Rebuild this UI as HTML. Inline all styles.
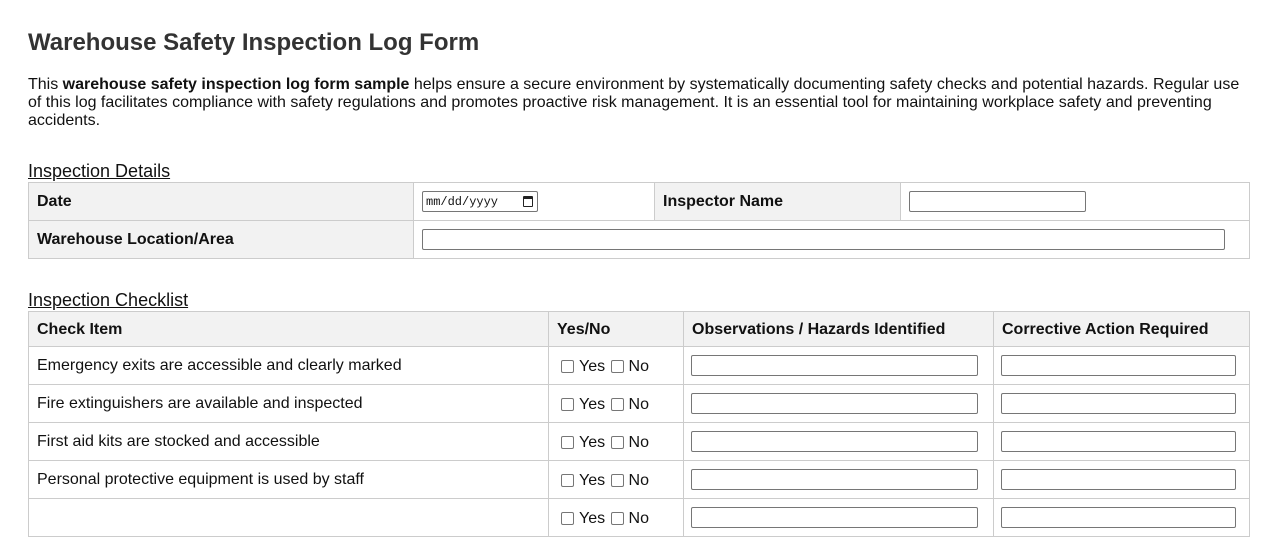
<!DOCTYPE html>
<html><head><meta charset="utf-8"><style>
*{box-sizing:border-box;margin:0;padding:0}
body{width:1278px;height:501px;overflow:hidden;background:#fff;font-family:"Liberation Sans",Arial,sans-serif;color:#111;position:relative}
h1{position:absolute;left:28px;top:29px;font-size:24px;font-weight:bold;color:#333;line-height:28px}
p{position:absolute;left:28px;top:76px;width:1225px;font-size:16px;line-height:18px;color:#111}
.h{position:absolute;left:28px;font-size:18px;text-decoration:underline;color:#111;line-height:20px}
.c{position:absolute;border:1px solid #ccc;font-size:16px;display:flex;align-items:center;padding-left:8px;padding-top:1px}
.g{background:#f2f2f2;font-weight:bold}
.in{position:absolute;border:1px solid #767676;border-radius:2px;background:#fff;height:21px}
.cb{display:inline-block;width:13px;height:13px;border:1px solid #767676;border-radius:2px;margin-right:5px;position:relative;top:-1px}
</style></head><body>
<h1>Warehouse Safety Inspection Log Form</h1>
<p>This <b>warehouse safety inspection log form sample</b> helps ensure a secure environment by systematically documenting safety checks and potential hazards. Regular use of this log facilitates compliance with safety regulations and promotes proactive risk management. It is an essential tool for maintaining workplace safety and preventing accidents.</p>
<div class="h" style="top:161px">Inspection Details</div>
<div class="c g" style="left:28px;top:182px;width:386px;height:39px">Date</div>
<div class="c" style="left:413px;top:182px;width:242px;height:39px"></div>
<div class="c g" style="left:654px;top:182px;width:247px;height:39px">Inspector Name</div>
<div class="c" style="left:900px;top:182px;width:350px;height:39px"></div>
<div class="c g" style="left:28px;top:220px;width:386px;height:39px">Warehouse Location/Area</div>
<div class="c" style="left:413px;top:220px;width:837px;height:39px"></div>
<div class="in" style="left:422px;top:191px;width:116px;font-family:'Liberation Mono',monospace;font-size:12px;padding:3px 3px;line-height:14px">mm/dd/yyyy<span style="position:absolute;right:4px;top:4px;width:10px;height:11px;border:1.5px solid #222;border-top-width:3px;border-radius:1px"></span></div>
<div class="in" style="left:909px;top:191px;width:177px"></div>
<div class="in" style="left:422px;top:229px;width:803px"></div>
<div class="h" style="top:290px">Inspection Checklist</div>
<div class="c g" style="left:28px;top:311px;width:521px;height:36px">Check Item</div>
<div class="c g" style="left:548px;top:311px;width:136px;height:36px">Yes/No</div>
<div class="c g" style="left:683px;top:311px;width:311px;height:36px">Observations / Hazards Identified</div>
<div class="c g" style="left:993px;top:311px;width:257px;height:36px">Corrective Action Required</div>
<div id="rows"></div>
<script>
var items=["Emergency exits are accessible and clearly marked","Fire extinguishers are available and inspected","First aid kits are stocked and accessible","Personal protective equipment is used by staff",""];
var h="";items.forEach(function(t,i){var y=346+i*38;
h+='<div class="c" style="left:28px;top:'+y+'px;width:521px;height:39px">'+t+'</div>';
h+='<div class="c" style="left:548px;top:'+y+'px;width:136px;height:39px;padding-left:12px;padding-top:3px"><span class="cb"></span>Yes&nbsp;<span class="cb" style="margin-left:1px"></span>No</div>';
h+='<div class="c" style="left:683px;top:'+y+'px;width:311px;height:39px"></div>';
h+='<div class="c" style="left:993px;top:'+y+'px;width:257px;height:39px"></div>';
h+='<div class="in" style="left:691px;top:'+(y+9)+'px;width:287px"></div>';
h+='<div class="in" style="left:1001px;top:'+(y+9)+'px;width:235px"></div>';});
document.getElementById("rows").innerHTML=h;
</script>
</body></html>
